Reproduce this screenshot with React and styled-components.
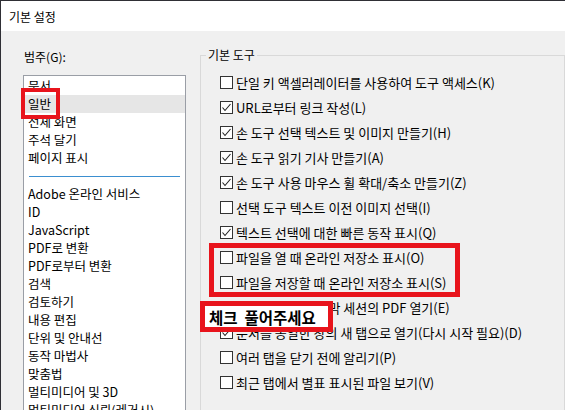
import React from 'react';
import styled, { createGlobalStyle } from 'styled-components';

const GlobalStyle = createGlobalStyle`
  html, body {
    margin: 0;
    padding: 0;
    overflow: hidden;
    background: #f0f0f0;
  }
  body {
    font-family: "Noto Sans CJK KR", "Noto Sans", sans-serif;
    font-size: 12px;
    color: #000;
  }
`;

const Window = styled.div`
  position: relative;
  width: 565px;
  height: 410px;
  box-sizing: border-box;
  border-top: 1px solid #2f2f35;
  border-left: 1px solid #2f2f35;
  display: flex;
  flex-direction: column;
  overflow: hidden;
  background: #f0f0f0;
`;

const TitleBar = styled.div`
  height: 30px;
  flex: 0 0 30px;
  background: #fff;
  display: flex;
  align-items: center;
  padding-left: 8px;
  font-size: 12px;
`;

const Body = styled.div`
  flex: 1;
  display: flex;
  align-items: flex-start;
  padding-top: 16px;
  overflow: hidden;
`;

const LeftPane = styled.div`
  display: flex;
  flex-direction: column;
  padding-left: 22px;
  width: 163px;
  flex: 0 0 163px;
`;

const CategoryLabel = styled.div`
  line-height: 16px;
  margin: 2px 0 10px 1px;
`;

const ListBox = styled.div`
  background: #fff;
  border: 1px solid #9a9ea6;
  height: 400px;
  padding-top: 1px;
`;

const ListItem = styled.div`
  height: 18px;
  line-height: 18px;
  padding-left: 4px;
  font-size: 12.5px;
  white-space: nowrap;
  background: ${p => (p.selected ? '#e6e6e6' : 'transparent')};
`;

const Separator = styled.div`
  height: 18px;
  display: flex;
  align-items: center;
  padding: 0 5px;

  &::after {
    content: '';
    flex: 1;
    height: 1px;
    background: #3b8fd0;
  }
`;

const Group = styled.fieldset`
  margin: 0 0 0 14px;
  padding: 0 0 0 5px;
  width: 420px;
  height: 420px;
  border: 1px solid #d9d9d9;
  box-sizing: border-box;
`;

const Legend = styled.legend`
  padding: 0 2px;
  line-height: 16px;
`;

const CheckList = styled.div`
  display: flex;
  flex-direction: column;
  padding: 7px 0 0 14px;
`;

const CheckRow = styled.div`
  height: 25px;
  display: flex;
  align-items: center;
  gap: 3px;
  font-size: 13px;
  white-space: nowrap;
`;

const Box = styled.span`
  width: 13px;
  height: 13px;
  box-sizing: border-box;
  border: 1px solid #333;
  background: #fff;
  display: inline-flex;
  align-items: center;
  justify-content: center;
  flex: 0 0 13px;
`;

const Callout = styled.div`
  position: absolute;
  box-sizing: border-box;
  border: ${p => p.stroke || 5}px solid #e8141c;
  background: ${p => (p.filled ? '#fff' : 'transparent')};
  display: flex;
  align-items: center;
  padding-left: 4px;
  font-weight: 700;
  font-size: 15.5px;
  white-space: nowrap;
`;

const Checkbox = ({ checked }) => (
  <Box>
    {checked && (
      <svg width="11" height="11" viewBox="0 0 11 11">
        <polyline points="1.5,5.5 4,8.5 9.5,2" fill="none" stroke="#222" strokeWidth="1.1" />
      </svg>
    )}
  </Box>
);

const categories = [
  '문서',
  '일반',
  '전체 화면',
  '주석 달기',
  '페이지 표시',
  null,
  'Adobe 온라인 서비스',
  'ID',
  'JavaScript',
  'PDF로 변환',
  'PDF로부터 변환',
  '검색',
  '검토하기',
  '내용 편집',
  '단위 및 안내선',
  '동작 마법사',
  '맞춤법',
  '멀티미디어 및 3D',
  '멀티미디어 신뢰(레거시)',
];

const options = [
  ['단일 키 액셀러레이터를 사용하여 도구 액세스(K)', false],
  ['URL로부터 링크 작성(L)', true],
  ['손 도구 선택 텍스트 및 이미지 만들기(H)', true],
  ['손 도구 읽기 기사 만들기(A)', true],
  ['손 도구 사용 마우스 휠 확대/축소 만들기(Z)', true],
  ['선택 도구 텍스트 이전 이미지 선택(I)', false],
  ['텍스트 선택에 대한 빠른 동작 표시(Q)', true],
  ['파일을 열 때 온라인 저장소 표시(O)', false],
  ['파일을 저장할 때 온라인 저장소 표시(S)', false],
  ['앱 시작할 때 마지막 세션의 PDF 열기(E)', true],
  ['문서를 동일한 창의 새 탭으로 열기(다시 시작 필요)(D)', true],
  ['여러 탭을 닫기 전에 알리기(P)', false],
  ['최근 탭에서 별표 표시된 파일 보기(V)', false],
];

const App = () => (
  <>
    <GlobalStyle />
    <Window>
      <TitleBar>기본 설정</TitleBar>
      <Body>
        <LeftPane>
          <CategoryLabel>범주(G):</CategoryLabel>
          <ListBox>
            {categories.map((c, i) =>
              c === null ? (
                <Separator key={i} />
              ) : (
                <ListItem key={i} selected={c === '일반'}>
                  {c}
                </ListItem>
              )
            )}
          </ListBox>
        </LeftPane>
        <Group>
          <Legend>기본 도구</Legend>
          <CheckList>
            {options.map(([label, checked]) => (
              <CheckRow key={label}>
                <Checkbox checked={checked} />
                {label}
              </CheckRow>
            ))}
          </CheckList>
        </Group>
      </Body>

      <Callout stroke={4} style={{ left: 20, top: 87, width: 39, height: 31 }} />
      <Callout style={{ left: 208, top: 242, width: 251, height: 54 }} />
      <Callout filled style={{ left: 199, top: 300, width: 133, height: 31 }}>
        체크&nbsp; 풀어주세요
      </Callout>
    </Window>
  </>
);

export default App;
